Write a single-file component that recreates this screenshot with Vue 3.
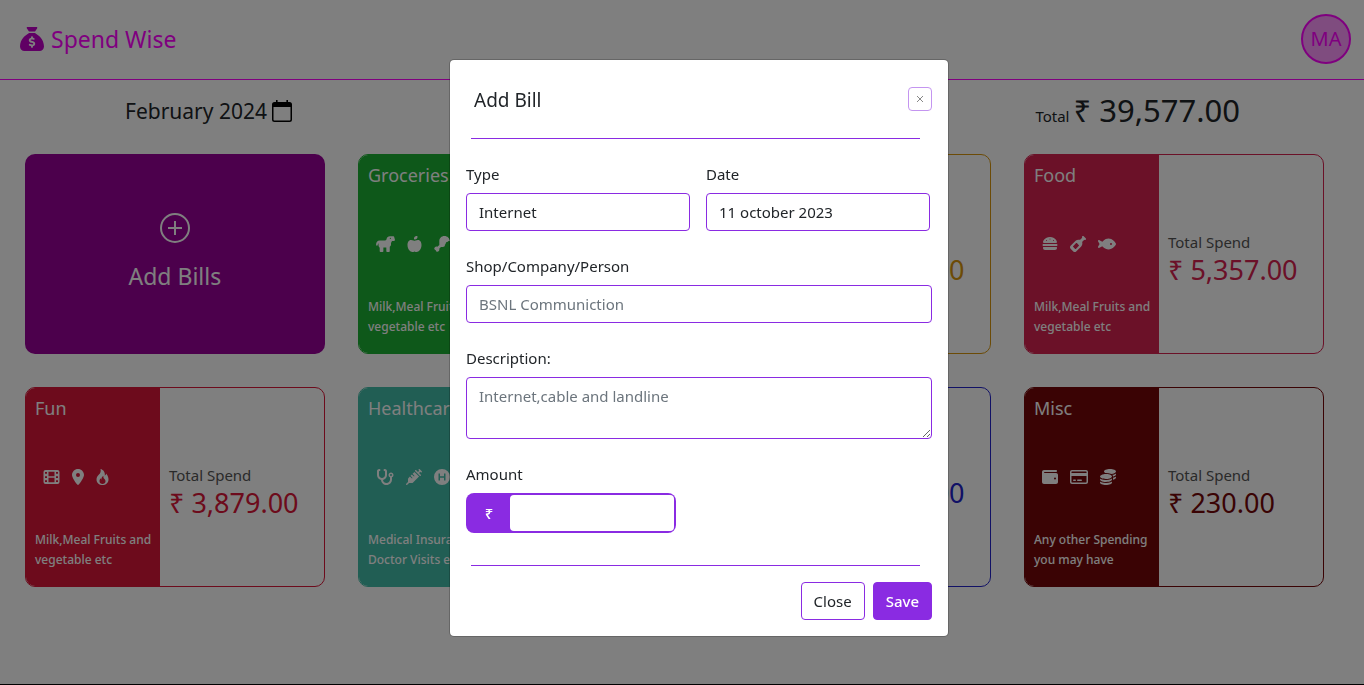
<script setup>
import { ref } from 'vue'

const icons = {
  film: { w: 544, d: 'M64 32H448a64 64 0 0 1 64 64V416a64 64 0 0 1-64 64H64a64 64 0 0 1-64-64V96a64 64 0 0 1 64-64zM48 96v56h64V96zM48 228v56h64v-56zM48 360v56h64v-56zM160 88v144h192V88zM160 280v144h192V280zM400 96v56h64V96zM400 228v56h64v-56zM400 360v56h64v-56z', box: '0 0 512 512' },
  pin: { w: 384, d: 'M215.7 499.2C267 435 384 279.4 384 192C384 86 298 0 192 0S0 86 0 192c0 87.4 117 243 168.3 307.2c12.3 15.3 35.1 15.3 47.4 0zM192 128a64 64 0 1 1 0 128 64 64 0 1 1 0-128z' },
  fire: { w: 416, box: '2 0 12 16', d: 'M8 16c3.314 0 6-2 6-5.500 0-1.500-.5-4-2.500-6 .25 1.500-1.250 2-1.250 2C11 4 9 .5 6 0c.357 2 .5 4-2 6-1.250 1-2 2.729-2 4.500C2 14 4.686 16 8 16zm0-1c-1.657 0-3-1-3-2.750 0-.75.25-2 1.250-3C6.125 10 7 10.500 7 10.500c-.375-1.250.5-3.250 2-3.500-.179 1-.25 2 1 3 .625.5 1 1.364 1 2.250C11 14 9.657 15 8 15z' },
  burger: { w: 512, d: 'M61 224C45 224 32 211 32 195c0-2 0-4 1-6C38 168 79 32 256 32s218 136 223 157c1 2 1 4 1 6c0 16-13 29-29 29H61zM16 288c0-17.7 14.3-32 32-32H464c17.7 0 32 14.3 32 32s-14.3 32-32 32H48c-17.7 0-32-14.3-32-32zm16 80c0-8.8 7.2-16 16-16H464c8.800 0 16 7.2 16 16v16c0 35.300-28.700 64-64 64H96c-35.300 0-64-28.700-64-64V368zM144 128a16 16 0 1 0 0 32 16 16 0 1 0 0-32zM256 80a16 16 0 1 0 0 32 16 16 0 1 0 0-32zM368 128a16 16 0 1 0 0 32 16 16 0 1 0 0-32z' },
  bottle: { w: 512, d: 'M393.4 9.4c12.5-12.5 32.8-12.5 45.3 0l64 64c12.5 12.5 12.5 32.8 0 45.3c-11.8 11.8-30.7 12.5-43.2 1.9l-9.5 9.5-48.8 48.8c-9.2 9.2-11.5 22.9-8.6 35.6c9.4 40.9-1.9 85.6-33.8 117.5L197.3 493.3c-25 25-65.5 25-90.5 0l-88-88c-25-25-25-65.5 0-90.5L180.2 153.3c31.9-31.9 76.6-43.1 117.5-33.8c12.6 2.9 26.4 .5 35.5-8.6l48.8-48.8 9.5-9.5c-10.6-12.6-10-31.4 1.9-43.2zM99.3 347.3l65.4 65.4c6.2 6.2 16.4 6.2 22.6 0l97.4-97.4c6.2-6.2 6.2-16.4 0-22.6l-65.4-65.4c-6.2-6.2-16.4-6.2-22.6 0L99.3 324.7c-6.2 6.2-6.2 16.4 0 22.6z' },
  fish: { w: 576, d: 'M180.5 141.5C219.7 108.5 272.6 80 336 80s116.3 28.5 155.5 61.5c39.1 33 66.9 72.4 81 99.8c4.7 9.2 4.7 20.1 0 29.3c-14.1 27.4-41.9 66.8-81 99.8C452.3 403.5 399.4 432 336 432s-116.3-28.5-155.5-61.5c-16.2-13.7-30.5-28.5-42.7-43.1L48.1 379.6c-12.5 7.3-28.4 5.3-38.7-4.9S-3 348.7 4.2 336.1L50 256 4.2 175.9c-7.2-12.6-5-28.4 5.3-38.6s26.1-12.2 38.7-4.9l89.7 52.3c12.2-14.6 26.5-29.4 42.7-43.1zM448 256a32 32 0 1 0 -64 0 32 32 0 1 0 64 0z' },
  apple: { w: 480, box: '0 0 448 512', d: 'M224 112c-8.8 0-16-7.2-16-16V80c0-44.2 35.8-80 80-80h16c8.8 0 16 7.2 16 16V32c0 44.2-35.8 80-80 80H224zM0 288c0-76.3 35.7-160 112-160c27.3 0 59.7 10.3 82.7 19.3c18.8 7.3 39.9 7.3 58.7 0c22.9-8.9 55.4-19.3 82.7-19.3c76.3 0 112 83.7 112 160c0 128-80 224-160 224c-16.5 0-38.1-6.6-51.5-11.3c-8.1-2.8-16.9-2.8-25 0c-13.4 4.7-35 11.3-51.5 11.3C80 512 0 416 0 288z' },
  horse: { w: 608, box: '0 0 608 512', d: 'M340 90C350 30 390 4 440 4H556C572 4 582 14 582 30L604 110C610 138 592 160 566 160H512L480 220V270C480 300 464 326 440 342V484C440 500 430 510 414 510H356C340 510 330 500 330 484V366H236V484C236 500 226 510 210 510H144C128 510 118 500 118 484V370C92 350 80 320 80 284V232C62 244 58 262 56 290C54 316 4 316 2 290C0 196 40 142 120 142H290C320 142 334 122 340 90zM460 52a20 20 0 1 0 0 40a20 20 0 1 0 0-40z' },
  drumstick: { w: 512, d: 'M170 160C170 70 240 0 330 0C430 0 500 70 512 170C480 150 444 160 430 190C390 186 364 220 376 256C350 260 338 292 350 320C330 338 300 350 270 350H222L168 404C180 430 172 468 146 490C112 518 64 500 58 454C12 448-6 400 22 366C44 340 80 332 108 344L170 286z' },
  stethoscope: { w: 576, d: 'M142.4 21.9c5.6 16.8-3.5 34.9-20.2 40.5L96 71.1V192c0 53 43 96 96 96s96-43 96-96V71.1l-26.1-8.7c-16.8-5.6-25.8-23.7-20.2-40.5s23.7-25.8 40.5-20.2l26.1 8.7C334.4 19.1 352 43.5 352 71.1V192c0 77.2-54.6 141.6-127.3 156.7C231 404.6 278.4 448 336 448c61.9 0 112-50.1 112-112V265.3c-28.3-12.3-48-40.5-48-73.3c0-44.2 35.8-80 80-80s80 35.8 80 80c0 32.8-19.7 61-48 73.3V336c0 97.2-78.8 176-176 176c-92.9 0-168.9-71.9-175.5-163.1C87.2 334.2 32 269.6 32 192V71.1c0-27.5 17.6-52 43.8-60.7l26.1-8.7c16.8-5.6 34.9 3.5 40.5 20.2zM480 224a32 32 0 1 0 0-64 32 32 0 1 0 0 64z' },
  syringe: { w: 512, d: 'M441 7l64 64c9.4 9.4 9.4 24.6 0 33.9s-24.6 9.4-33.9 0l-15-15L417.9 128l55 55c9.4 9.4 9.4 24.6 0 33.9s-24.6 9.4-33.9 0L295 73c-9.4-9.4-9.4-24.6 0-33.9s24.6-9.4 33.9 0l55 55L422.1 56 407 41c-9.4-9.4-9.4-24.6 0-33.9s24.6-9.4 33.9 0zM210.3 155.7l61.1-61.1l146 146l-191 191c-10.5 10.5-24.7 16.4-39.6 16.4H97.9L41 505c-9.4 9.4-24.6 9.4-33.9 0s-9.4-24.6 0-33.9l57-57V325.3c0-14.9 5.9-29.1 16.4-39.6l43.3-43.3 57 57c6.2 6.2 16.4 6.2 22.6 0s6.2-16.4 0-22.6l-57-57 41.4-41.4 57 57c6.2 6.2 16.4 6.2 22.6 0s6.2-16.4 0-22.6l-57-57z' },
  hospital: { w: 512, d: 'M256 0a256 256 0 1 1 0 512a256 256 0 1 1 0-512zM144 144V368H192V280H320V368H368V144H320V232H192V144z' },
  wallet: { w: 512, d: 'M64 32C28.7 32 0 60.7 0 96V416c0 35.3 28.7 64 64 64H448c35.3 0 64-28.7 64-64V192c0-35.3-28.7-64-64-64H80c-8.8 0-16-7.2-16-16s7.2-16 16-16H448c17.7 0 32-14.3 32-32s-14.3-32-32-32H64zM416 272a32 32 0 1 1 0 64 32 32 0 1 1 0-64z' },
  card: { w: 576, d: 'M512 80c8.8 0 16 7.2 16 16v32H48V96c0-8.8 7.2-16 16-16H512zm16 144V416c0 8.8-7.2 16-16 16H64c-8.8 0-16-7.2-16-16V224H528zM64 32C28.7 32 0 60.7 0 96V416c0 35.3 28.7 64 64 64H512c35.3 0 64-28.7 64-64V96c0-35.3-28.7-64-64-64H64zm56 304c-13.3 0-24 10.7-24 24s10.7 24 24 24h48c13.3 0 24-10.7 24-24s-10.7-24-24-24H120zm128 0c-13.3 0-24 10.7-24 24s10.7 24 24 24H360c13.3 0 24-10.7 24-24s-10.7-24-24-24H248z' },
  coins: { w: 512, d: 'M512 80c0 18-14.3 34.6-38.4 48c-29.1 16.1-72.5 27.5-122.3 30.9c-3.7-1.8-7.4-3.5-11.3-5C300.6 137.4 248.2 128 192 128c-8.3 0-16.4 .2-24.5 .6l-1.1-.6C142.3 114.6 128 98 128 80c0-44.2 86-80 192-80S512 35.8 512 80zM160.7 161.1c10.2-.7 20.7-1.1 31.3-1.1c62.2 0 117.4 12.3 152.5 31.4C369.3 204.9 384 221.7 384 240c0 4-.7 7.9-2.1 11.7c-4.6 13.2-17 25.3-35 35.5c-.4 .2-.9 .5-1.3 .7c-35 19.4-90.8 32-153.6 32c-59.6 0-112.9-11.3-148.2-29.1c-1.9-.9-3.7-1.9-5.5-2.9C14.3 274.6 0 258 0 240c0-34.8 53.4-64.5 128-75.4c10.5-1.5 21.4-2.7 32.7-3.5zM416 240c0-21.9-10.6-39.9-24.1-53.4c28.3-4.4 54.2-11.4 76.2-20.5c16.3-6.8 31.5-15.2 43.9-25.5V176c0 19.3-16.5 37.1-43.8 50.9c-14.6 7.4-32.4 13.7-52.4 18.5c.1-1.8 .2-3.5 .2-5.3zm-32 96c0 18-14.3 34.6-38.4 48c-1.8 1-3.6 1.9-5.5 2.9C304.9 404.7 251.6 416 192 416c-62.8 0-118.6-12.6-153.6-32C14.3 370.6 0 354 0 336V300.6c12.5 10.3 27.6 18.7 43.9 25.5C83.4 342.6 135.8 352 192 352s108.6-9.4 148.1-25.9c7.8-3.2 15.3-6.9 22.4-10.9c6.1-3.4 11.8-7.2 17.2-11.2c1.5-1.1 2.9-2.3 4.3-3.4V336zm32 0V278.1c19-4.2 36.5-9.5 52.1-16c16.3-6.8 31.5-15.2 43.9-25.5V272c0 10.5-5 21-14.9 30.9c-16.3 16.3-45 29.7-81.3 38.4c.1-1.7 .2-3.5 .2-5.3zM192 448c56.2 0 108.6-9.4 148.1-25.9c16.3-6.8 31.5-15.2 43.9-25.5V432c0 44.2-86 80-192 80S0 476.2 0 432V396.6c12.5 10.3 27.6 18.7 43.9 25.5C83.4 438.6 135.8 448 192 448z' },
}

const cards = [
  { tone: 'green', title: 'Groceries', icons: ['horse', 'apple', 'drumstick'], note: 'Milk,Meal Fruits and vegetable etc' },
  { tone: 'gold', icons: [], amount: '5,000.00' },
  { tone: 'rose', title: 'Food', icons: ['burger', 'bottle', 'fish'], note: 'Milk,Meal Fruits and vegetable etc', label: 'Total Spend', amount: '5,357.00' },
  { tone: 'crimson', title: 'Fun', icons: ['film', 'pin', 'fire'], note: 'Milk,Meal Fruits and vegetable etc', label: 'Total Spend', amount: '3,879.00' },
  { tone: 'teal', title: 'Healthcare', icons: ['stethoscope', 'syringe', 'hospital'], note: 'Medical Insurance Doctor Visits etc' },
  { tone: 'blue', icons: [], amount: '5,000.00', raised: true },
  { tone: 'maroon', title: 'Misc', icons: ['wallet', 'card', 'coins'], note: 'Any other Spending you may have', label: 'Total Spend', amount: '230.00' },
]

const type = ref('Internet')
const date = ref('11 october 2023')
const shop = ref('')
const description = ref('')
const amount = ref('')
</script>

<template>
  <div class="page">
    <header class="topbar">
      <a class="brand" href="#">
        <svg class="brand-icon" viewBox="0 0 512 512" aria-hidden="true">
          <path d="M320 96H192L144.6 24.9C137.5 14.2 145.1 0 157.9 0H354.1c12.8 0 20.4 14.2 13.3 24.9L320 96zM192 128H320c3.8 2.5 8.1 5.3 13 8.4C389.7 172.7 512 250.9 512 416c0 53-43 96-96 96H96c-53 0-96-43-96-96C0 250.9 122.3 172.7 179 136.4c4.8-3.1 9.2-5.9 13-8.4zm84 88c0-11-9-20-20-20s-20 9-20 20v14c-7.6 1.7-15.2 4.4-22.2 8.5c-13.9 8.3-25.9 22.8-25.8 43.9c.1 20.3 12 33.1 24.7 40.7c11 6.6 24.7 10.8 35.6 14l1.7 .5c12.6 3.8 21.8 6.8 28 10.7c5.1 3.2 5.8 5.4 5.9 8.2c.1 5-1.8 8-5.9 10.5c-5 3.1-12.9 5-21.4 4.7c-11.1-.4-21.5-3.9-35.1-8.5c-2.3-.8-4.7-1.6-7.2-2.4c-10.5-3.5-21.8 2.2-25.3 12.6s2.2 21.8 12.6 25.3c1.9 .6 4 1.3 6.1 2.1c8.3 2.9 17.9 6.2 28.2 8.4V424c0 11 9 20 20 20s20-9 20-20V410.2c8-1.7 16-4.5 23.2-9c14.3-8.9 25.1-24.1 24.8-45c-.3-20.3-11.7-33.4-24.6-41.6c-11.5-7.2-25.9-11.6-37.1-15l-.7-.2c-12.8-3.9-21.9-6.7-28.3-10.5c-5.2-3.1-5.3-4.9-5.3-6.7c0-3.7 1.4-6.5 6.2-9.3c5.4-3.2 13.6-5.1 21.5-5c9.6 .1 20.2 2.2 31.2 5.2c10.7 2.8 21.6-3.5 24.5-14.2s-3.5-21.6-14.2-24.5c-6.5-1.7-13.7-3.4-21.1-4.7V216z" />
        </svg>
        Spend Wise
      </a>
      <button class="avatar" type="button">MA</button>
    </header>

    <main>
      <section class="summary">
        <button class="month" type="button">
          February 2024
          <svg width="20" height="22" viewBox="0 0 20 22" aria-hidden="true">
            <path fill-rule="evenodd" d="M4 0h1.600v2h8.800V0H16v2h1.500A2.500 2.500 0 0 1 20 4.500v15a2.500 2.500 0 0 1-2.500 2.500h-15A2.500 2.500 0 0 1 0 19.500v-15A2.500 2.500 0 0 1 2.500 2H4zM1.500 7v12.500c0 .7.500 1.100 1.100 1.100h14.800c.6 0 1.100-.4 1.100-1.100V7z" />
          </svg>
        </button>
        <p class="total"><span>Total</span><strong>₹ 39,577.00</strong></p>
      </section>

      <section class="cards">
        <button class="add-card" type="button">
          <svg width="30" height="30" viewBox="0 0 30 30" aria-hidden="true">
            <circle cx="15" cy="15" r="14" />
            <path d="M15 8v14M8 15h14" />
          </svg>
          Add Bills
        </button>
        <article v-for="(card, i) in cards" :key="i" class="card" :class="card.tone">
          <div class="panel">
            <h2>{{ card.title }}</h2>
            <div class="icons">
              <svg v-for="name in card.icons" :key="name" height="16" :width="icons[name].w / 32" :viewBox="icons[name].box || `0 0 ${icons[name].w} 512`" aria-hidden="true">
                <path fill-rule="evenodd" :d="icons[name].d" />
              </svg>
            </div>
            <p>{{ card.note }}</p>
          </div>
          <div v-if="card.amount" class="spend" :class="{ raised: card.raised }">
            <span class="label">{{ card.label }}</span>
            <strong>₹ {{ card.amount }}</strong>
          </div>
        </article>
      </section>
    </main>

    <div class="backdrop">
      <form class="modal" role="dialog" aria-labelledby="modal-title" @submit.prevent>
        <div class="modal-head">
          <h1 id="modal-title">Add Bill</h1>
          <button class="dismiss" type="button" aria-label="Dismiss">
            <svg width="8" height="8" viewBox="0 0 8 8" aria-hidden="true"><path d="M1 1l6 6M7 1L1 7" /></svg>
          </button>
        </div>
        <hr />
        <div class="fields">
          <div class="pair">
            <div class="field">
              <label for="type">Type</label>
              <input id="type" v-model="type" type="text" />
            </div>
            <div class="field">
              <label for="date">Date</label>
              <input id="date" v-model="date" type="text" />
            </div>
          </div>
          <div class="field">
            <label for="shop">Shop/Company/Person</label>
            <input id="shop" v-model="shop" type="text" placeholder="BSNL Communiction" />
          </div>
          <div class="field">
            <label for="description">Description:</label>
            <textarea id="description" v-model="description" rows="2" placeholder="Internet,cable and landline"></textarea>
          </div>
          <div class="field">
            <label for="amount">Amount</label>
            <div class="money">
              <span>₹</span>
              <input id="amount" v-model="amount" type="text" />
            </div>
          </div>
        </div>
        <hr />
        <div class="actions">
          <button class="close" type="button">Close</button>
          <button class="save" type="submit">Save</button>
        </div>
      </form>
    </div>
  </div>
</template>

<style>
body {
  margin: 0;
}
</style>

<style scoped>
* {
  box-sizing: border-box;
}
.page {
  min-height: 100vh;
  border-bottom: 1px solid #000;
  background: #fff;
  color: #212529;
  font: 15px/24px "Noto Sans", sans-serif;
}
button,
input,
textarea {
  font: inherit;
  color: inherit;
}
h1,
h2,
p {
  margin: 0;
  font-weight: 400;
}
strong {
  font-weight: 400;
}
.topbar {
  display: flex;
  align-items: center;
  justify-content: space-between;
  height: 80px;
  padding: 0 13px 2px 20px;
  border-bottom: 1px solid #f0f;
}
.brand {
  display: flex;
  align-items: center;
  gap: 7px;
  color: #f0f;
  font-size: 23px;
  text-decoration: none;
}
.brand-icon {
  width: 24px;
  height: 24px;
  fill: #c000c8;
}
.avatar {
  width: 50px;
  height: 50px;
  padding: 0;
  border: 2px solid #f0f;
  border-radius: 50%;
  background: #f9f;
  color: #f0f;
  font-size: 20px;
}
.summary {
  display: flex;
  align-items: center;
  justify-content: space-between;
  height: 62px;
  padding: 0 124px 0 125px;
}
.month {
  display: flex;
  align-items: center;
  gap: 5px;
  padding: 0;
  border: 0;
  background: none;
  font-size: 21px;
}
.total {
  display: flex;
  align-items: baseline;
  gap: 4px;
  padding-top: 4px;
}
.total strong {
  font-size: 31px;
}
.cards {
  display: grid;
  grid-template-columns: repeat(4, 1fr);
  gap: 33px 0;
  padding: 12px 7px 32px 25px;
}
.add-card,
.card {
  width: 90%;
  height: 200px;
  border-radius: 10px;
}
.add-card {
  display: flex;
  flex-direction: column;
  align-items: center;
  gap: 19px;
  padding: 59px 0 0;
  border: 0;
  background: #990099;
  color: #fff;
  font-size: 23px;
  line-height: 28px;
}
.add-card svg {
  fill: none;
  stroke: #fff;
  stroke-width: 2;
}
.card {
  display: flex;
  overflow: hidden;
  border: 1px solid var(--tone);
}
.green { --tone: #1cb034; }
.gold { --tone: #d8960c; }
.rose { --tone: #d62250; }
.crimson { --tone: #da1638; }
.teal { --tone: #42bca8; }
.blue { --tone: #2222cc; }
.maroon { --tone: #740608; }
.panel {
  display: flex;
  flex: 0 0 45%;
  flex-direction: column;
  justify-content: space-between;
  padding: 8px 4px 16px 9px;
  background: var(--tone);
  color: #fff;
}
.panel h2 {
  min-height: 24px;
  font-size: 18px;
}
.panel p {
  min-height: 40px;
  font-size: 12px;
  font-weight: 500;
  line-height: 20px;
}
.icons {
  display: flex;
  gap: 12px;
  height: 20px;
  padding: 4px 0 0 8px;
  fill: #fff;
}
.spend {
  display: flex;
  flex: 1;
  flex-direction: column;
  justify-content: center;
  padding: 8px 0 0 9px;
}
.spend.raised {
  padding-bottom: 20px;
}
.spend .label {
  min-height: 24px;
  color: #555;
}
.spend strong {
  color: var(--tone);
  font-size: 27px;
  line-height: 32px;
}
.backdrop {
  position: fixed;
  inset: 0;
  display: flex;
  align-items: flex-start;
  justify-content: center;
  padding: 59px 0 0 34px;
  background: rgba(0, 0, 0, 0.5);
}
.modal {
  width: 500px;
  border: 1px solid rgba(0, 0, 0, 0.2);
  border-radius: 5px;
  background: #fff;
  background-clip: padding-box;
}
.modal-head {
  display: flex;
  align-items: center;
  justify-content: space-between;
  height: 78px;
  padding: 0 16px 0 24px;
}
.modal-head h1 {
  padding-top: 2px;
  font-size: 19px;
}
.dismiss {
  display: grid;
  place-items: center;
  width: 24px;
  height: 24px;
  padding: 0;
  border: 1px solid #c495f0;
  border-radius: 4px;
  background: #fff;
}
.dismiss svg {
  fill: none;
  stroke: #888;
}
hr {
  height: 1px;
  margin: 0 28px 0 21px;
  border: 0;
  background: #8a2be2;
}
.fields {
  display: grid;
  gap: 23px;
  padding: 23px 16px 32px;
}
.field {
  display: grid;
  gap: 7px;
}
.pair {
  display: grid;
  grid-template-columns: 1fr 1fr;
  gap: 16px;
  padding-right: 2px;
}
.field > input,
textarea {
  display: block;
  width: 100%;
  height: 38px;
  padding: 6px 12px;
  border: 1px solid #8a2be2;
  border-radius: 4px;
  background: #fff;
}
textarea {
  height: 62px;
}
::placeholder {
  color: #6c757d;
  opacity: 1;
}
.money {
  display: flex;
  width: 45%;
  height: 40px;
  padding: 2px;
  border-radius: 8px;
  background: #8a2be2;
}
.money span {
  flex: 0 0 42px;
  color: #fff;
  font-weight: 500;
  line-height: 36px;
  text-align: center;
}
.money input {
  flex: 1;
  min-width: 0;
  border: 0;
  border-radius: 4px;
  background: #fff;
}
.actions {
  display: flex;
  justify-content: flex-end;
  gap: 8px;
  padding: 16px;
}
.actions button {
  height: 38px;
  padding: 0 12px;
  border: 1px solid #8a2be2;
  border-radius: 4px;
  background: #fff;
}
.actions .save {
  background: #8a2be2;
  color: #fff;
  font-weight: 500;
}
</style>
